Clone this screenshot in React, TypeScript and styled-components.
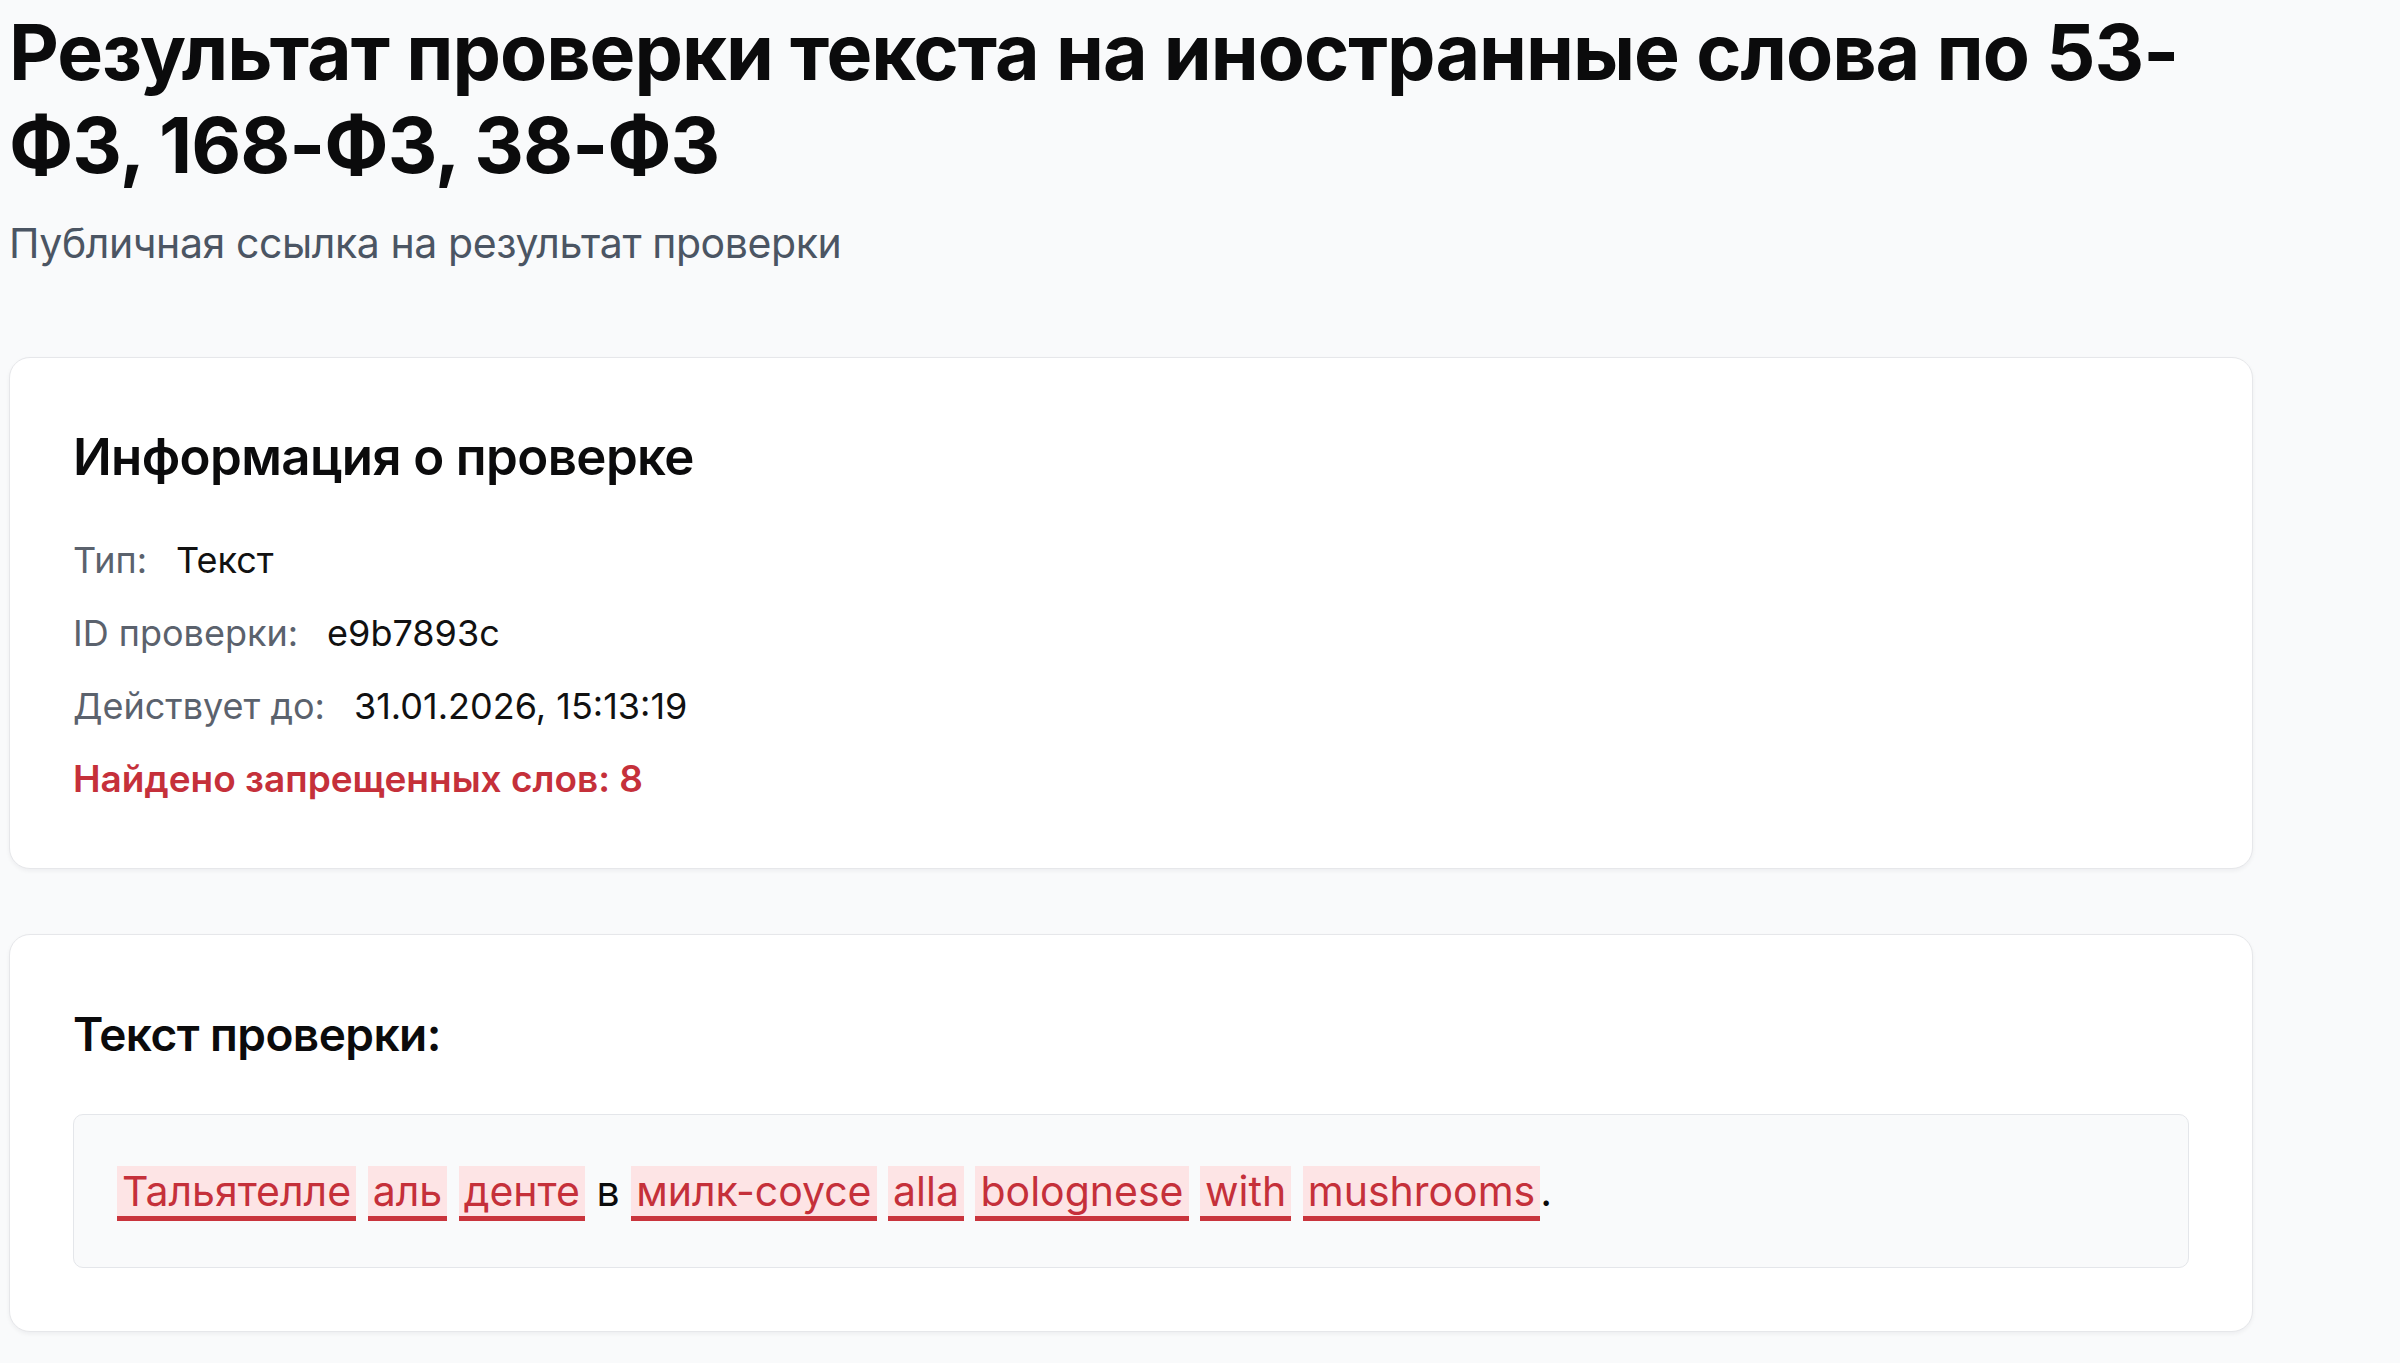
import React from "react";
import styled, { createGlobalStyle } from "styled-components";

const GlobalStyle = createGlobalStyle`
	* {
		box-sizing: border-box;
	}

	body {
		margin: 0;
		background: #f9fafb;
		font-family: Inter, "Noto Sans", "Liberation Sans", sans-serif;
		color: #111111;
	}
`;

const Page = styled.div`
	height: 100vh;
	overflow: hidden;
	padding: 6px 9px 0;
`;

const Container = styled.main`
	width: 2244px;
	display: flex;
	flex-direction: column;
`;

const Title = styled.h1`
	margin: 0;
	font-size: 77px;
	line-height: 93px;
	font-weight: 700;
	letter-spacing: -0.013em;
	color: #0b0b0c;
`;

const Subtitle = styled.p`
	margin: 20px 0 83px;
	font-size: 41px;
	line-height: 62px;
	color: #4b5563;
	letter-spacing: -0.01em;
`;

const Cards = styled.div`
	display: flex;
	flex-direction: column;
	gap: 65px;
`;

const Card = styled.section`
	background: #ffffff;
	border: 1px solid #e6e7ea;
	border-radius: 21px;
	box-shadow: 0 2px 4px rgba(15, 23, 42, 0.05);
	padding: 63px;
`;

const CardTitle = styled.h2<{ $size: number; $gap: number }>`
	margin: 0 0 ${(p) => p.$gap}px;
	font-size: ${(p) => p.$size}px;
	line-height: 72px;
	font-weight: 600;
	letter-spacing: -0.012em;
	color: #0b0b0c;
`;

const InfoList = styled.div`
	display: flex;
	flex-direction: column;
	gap: 21px;
`;

const InfoRow = styled.div`
	display: flex;
	align-items: baseline;
	gap: 29px;
	font-size: 36px;
	line-height: 52px;
`;

const Label = styled.span`
	color: #5b626d;
`;

const Value = styled.span`
	color: #111111;
`;

const Alert = styled.div`
	font-size: 37px;
	line-height: 52px;
	font-weight: 600;
	color: #c5303a;
`;

const TextBox = styled.div`
	background: #f9fafb;
	border: 1px solid #e4e6ea;
	border-radius: 10px;
	padding: 41px 43px;
	font-size: 41px;
	line-height: 70px;
	color: #0b0b0c;
`;

const Forbidden = styled.mark`
	background: #fde4e5;
	color: #c5303a;
	padding: 0 5px;
	border-bottom: 5px solid #c9343c;
`;

type Piece = { text: string; bad: boolean };

const pieces: Piece[] = [
	{ text: "Тальятелле", bad: true },
	{ text: " ", bad: false },
	{ text: "аль", bad: true },
	{ text: " ", bad: false },
	{ text: "денте", bad: true },
	{ text: " в ", bad: false },
	{ text: "милк-соусе", bad: true },
	{ text: " ", bad: false },
	{ text: "alla", bad: true },
	{ text: " ", bad: false },
	{ text: "bolognese", bad: true },
	{ text: " ", bad: false },
	{ text: "with", bad: true },
	{ text: " ", bad: false },
	{ text: "mushrooms", bad: true },
	{ text: ".", bad: false },
];

const info = [
	{ label: "Тип:", value: "Текст" },
	{ label: "ID проверки:", value: "e9b7893c" },
	{ label: "Действует до:", value: "31.01.2026, 15:13:19" },
];

export default function App() {
	return (
		<>
			<GlobalStyle />
			<Page>
				<Container>
					<Title>
						Результат проверки текста на иностранные слова по 53-ФЗ, 168-ФЗ, 38-ФЗ
					</Title>
					<Subtitle>Публичная ссылка на результат проверки</Subtitle>

					<Cards>
						<Card>
							<CardTitle $size={51} $gap={41}>
								Информация о проверке
							</CardTitle>
							<InfoList>
								{info.map((row) => (
									<InfoRow key={row.label}>
										<Label>{row.label}</Label>
										<Value>{row.value}</Value>
									</InfoRow>
								))}
								<Alert>Найдено запрещенных слов: 8</Alert>
							</InfoList>
						</Card>

						<Card>
							<CardTitle $size={46} $gap={44}>
								Текст проверки:
							</CardTitle>
							<TextBox>
								{pieces.map((p, i) =>
									p.bad ? (
										<Forbidden key={i}>{p.text}</Forbidden>
									) : (
										<span key={i}>{p.text}</span>
									)
								)}
							</TextBox>
						</Card>
					</Cards>
				</Container>
			</Page>
		</>
	);
}
